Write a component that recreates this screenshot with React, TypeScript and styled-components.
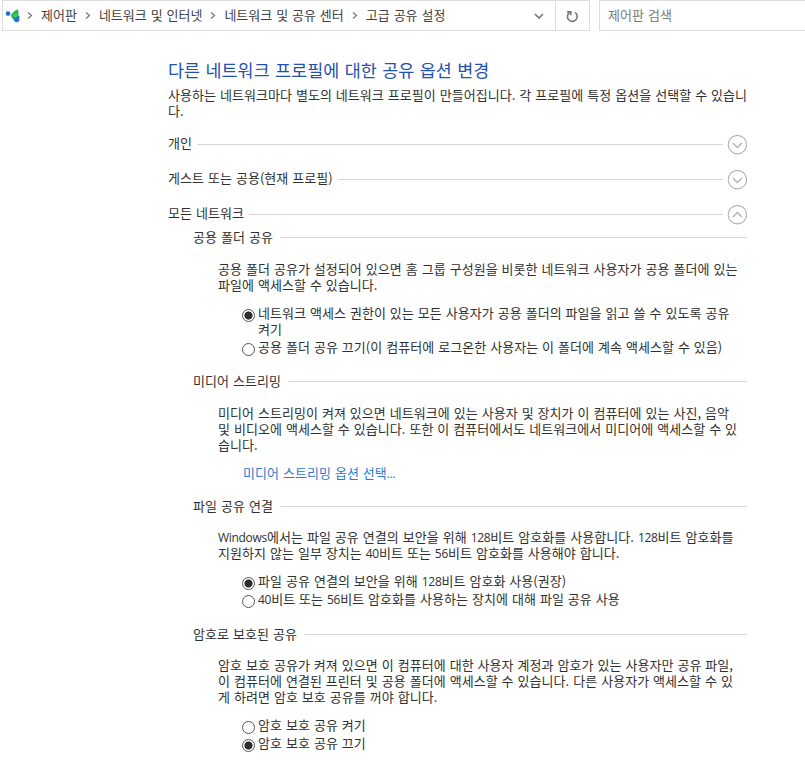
import React from 'react';
import styled, { createGlobalStyle } from 'styled-components';

const GlobalStyle = createGlobalStyle`
  * {
    box-sizing: border-box;
  }

  body {
    margin: 0;
    background: #fff;
    color: #303030;
    font-family: 'Noto Sans CJK KR', sans-serif;
    font-size: 13px;
    line-height: 16px;
    letter-spacing: 0.04px;
    word-spacing: 1px;
    overflow: hidden;
  }
`;

const Page = styled.div`
  width: 805px;
  height: 772px;
  overflow: hidden;
`;

const TopBar = styled.header`
  display: flex;
  height: 31px;
  padding-left: 2px;
  gap: 9px;
`;

const AddressBar = styled.div`
  display: flex;
  width: 588px;
  border: 1px solid #dedede;
`;

const Breadcrumbs = styled.nav`
  display: flex;
  align-items: center;
  flex: 1;
  padding-left: 2px;
  white-space: nowrap;
`;

const Crumb = styled.span`
  padding-bottom: 2px;
  color: #3f3f3f;
  letter-spacing: 0;
`;

const Separator = styled.svg<{ $first: boolean }>`
  width: 6px;
  height: 8px;
  margin: 0 8px 0 ${({ $first }) => ($first ? 6 : 8)}px;
  fill: none;
  stroke: #777;
  stroke-width: 1.2;
`;

const BarButton = styled.button<{ $divided?: boolean }>`
  display: flex;
  align-items: center;
  justify-content: center;
  width: 34px;
  padding: ${({ $divided }) => ($divided ? '1px 0 0' : '2px 0 0 2px')};
  border: 0;
  border-left: ${({ $divided }) => ($divided ? '1px solid #dedede' : '0')};
  background: none;
`;

const SearchBox = styled.div`
  display: flex;
  align-items: center;
  flex: 1;
  padding: 0 0 2px 8px;
  border: 1px solid #dedede;
  border-right: 0;
  color: #7b7b7b;
`;

const Content = styled.main`
  width: 579px;
  margin: 27px 0 0 168px;
`;

const Title = styled.h1`
  margin: 0;
  color: #2450b0;
  font-size: 17.4px;
  font-weight: 400;
  line-height: 24px;
  word-spacing: 1.5px;
  white-space: nowrap;
`;

const Lines = styled.div<{ $top?: number }>`
  margin-top: ${({ $top = 0 }) => $top}px;
`;

const Line = styled.div`
  height: 16px;
  white-space: pre;
`;

const Latin = styled.span`
  font-family: 'Open Sans', 'Noto Sans', sans-serif;
  font-size: 12px;
  line-height: 1;
  letter-spacing: -0.3px;
`;

const Profiles = styled.div`
  display: flex;
  flex-direction: column;
  gap: 15px;
  margin-top: 16px;
`;

const Profile = styled.div`
  display: flex;
  align-items: center;
  height: 20px;
`;

const ProfileLabel = styled.span`
  padding-bottom: 4px;
  white-space: nowrap;
`;

const Rule = styled.span<{ $margin: string }>`
  flex: 1;
  height: 1px;
  margin: ${({ $margin }) => $margin};
  background: #d5d5d5;
`;

const Section = styled.section<{ $top: number }>`
  margin: ${({ $top }) => $top}px 0 0 25px;
`;

const SectionHead = styled.h2`
  display: flex;
  align-items: center;
  height: 16px;
  margin: 0;
  font-size: 13px;
  font-weight: 400;
  white-space: nowrap;
`;

const SectionBody = styled.div`
  padding-left: 25px;
`;

const Options = styled.div`
  display: flex;
  flex-direction: column;
  gap: 2px;
  margin: 12px 0 0 24px;
`;

const Option = styled.label`
  display: flex;
  align-items: flex-start;
  gap: 3px;
`;

const Radio = styled.span<{ $checked: boolean }>`
  flex: none;
  width: 13px;
  height: 13px;
  margin: 4px 0 -1px;
  border: 1px solid #555;
  border-radius: 50%;
  background: ${({ $checked }) =>
    $checked ? 'radial-gradient(circle, #2e2e2e 3.7px, #fff 4.4px)' : '#fff'};
`;

const Link = styled.a`
  display: block;
  margin: 12px 0 0 25px;
  color: #2b7cd3;
`;

const NetworkIcon = () => (
  <svg width="16" height="16" viewBox="0 0 16 16">
    <path d="M3.5 6.5 9 7l3-4M9 8l4 5" fill="none" stroke="#9ccbe8" />
    <circle cx="3" cy="5.6" r="2.3" fill="#1973c8" />
    <path d="M6.2 7.5C7 4.5 9.5 2 13.4 1.4V9.5L10.5 12C8 11.3 6.2 10 6.2 7.5Z" fill="#25b34b" />
    <path d="M8.5 8.5 14.4 8v3.5c0 1.6-1 2.7-2.5 2.7-2.2 0-3-1.4-3.2-3Z" fill="#1d78c5" />
    <path d="M7.5 6.5 12 5v4l-2.2 1.2Z" fill="#37c657" />
  </svg>
);

const CrumbArrow = ({ first }: { first: boolean }) => (
  <Separator viewBox="0 0 6 8" $first={first}>
    <path d="m1 .5 3.5 3L1 6.5" />
  </Separator>
);

const Expander = ({ open }: { open: boolean }) => (
  <svg width="20" height="20" viewBox="0 0 20 20" fill="none" stroke="#b3b3b3">
    <circle cx="10.4" cy="9.7" r="9.2" strokeWidth="1.1" />
    <path d={open ? 'm5.9 12 4.5-4.5 4.5 4.5' : 'm5.9 8 4.5 4.5L14.9 8'} strokeWidth="1.4" />
  </svg>
);

// Latin words, digits and the ellipsis use a narrower face than the Hangul
const Mixed = ({ text }: { text: string }) => (
  <div>
    {text.split('\n').map((line) => (
      <Line key={line}>
        {line
          .split(/([A-Za-z0-9]+|\.{3})/)
          .map((part, i) => (i % 2 ? <Latin key={i}>{part}</Latin> : part))}
      </Line>
    ))}
  </div>
);

const crumbs = ['제어판', '네트워크 및 인터넷', '네트워크 및 공유 센터', '고급 공유 설정'];

const profiles = [
  { label: '개인', open: false },
  { label: '게스트 또는 공용(현재 프로필)', open: false },
  { label: '모든 네트워크', open: true },
];

interface SectionData {
  title: string;
  top: number;
  textTop: number;
  text: string;
  link?: string;
  options?: { label: string; checked: boolean }[];
}

const sections: SectionData[] = [
  {
    title: '공용 폴더 공유',
    top: 4,
    textTop: 16,
    text: '공용 폴더 공유가 설정되어 있으면 홈 그룹 구성원을 비롯한 네트워크 사용자가 공용 폴더에 있는\n파일에 액세스할 수 있습니다.',
    options: [
      {
        label: '네트워크 액세스 권한이 있는 모든 사용자가 공용 폴더의 파일을 읽고 쓸 수 있도록 공유\n켜기',
        checked: true,
      },
      { label: '공용 폴더 공유 끄기(이 컴퓨터에 로그온한 사용자는 이 폴더에 계속 액세스할 수 있음)', checked: false },
    ],
  },
  {
    title: '미디어 스트리밍',
    top: 18,
    textTop: 16,
    text: '미디어 스트리밍이 켜져 있으면 네트워크에 있는 사용자 및 장치가 이 컴퓨터에 있는 사진, 음악\n및 비디오에 액세스할 수 있습니다. 또한 이 컴퓨터에서도 네트워크에서 미디어에 액세스할 수 있\n습니다.',
    link: '미디어 스트리밍 옵션 선택...',
  },
  {
    title: '파일 공유 연결',
    top: 17,
    textTop: 15,
    text: 'Windows에서는 파일 공유 연결의 보안을 위해 128비트 암호화를 사용합니다. 128비트 암호화를\n지원하지 않는 일부 장치는 40비트 또는 56비트 암호화를 사용해야 합니다.',
    options: [
      { label: '파일 공유 연결의 보안을 위해 128비트 암호화 사용(권장)', checked: true },
      { label: '40비트 또는 56비트 암호화를 사용하는 장치에 대해 파일 공유 사용', checked: false },
    ],
  },
  {
    title: '암호로 보호된 공유',
    top: 19,
    textTop: 15,
    text: '암호 보호 공유가 켜져 있으면 이 컴퓨터에 대한 사용자 계정과 암호가 있는 사용자만 공유 파일,\n이 컴퓨터에 연결된 프린터 및 공용 폴더에 액세스할 수 있습니다. 다른 사용자가 액세스할 수 있\n게 하려면 암호 보호 공유를 꺼야 합니다.',
    options: [
      { label: '암호 보호 공유 켜기', checked: false },
      { label: '암호 보호 공유 끄기', checked: true },
    ],
  },
];

const App = () => {
  return (
    <Page>
      <GlobalStyle />
      <TopBar>
        <AddressBar>
          <Breadcrumbs>
            <NetworkIcon />
            {crumbs.map((crumb, i) => (
              <React.Fragment key={crumb}>
                <CrumbArrow first={i === 0} />
                <Crumb>{crumb}</Crumb>
              </React.Fragment>
            ))}
          </Breadcrumbs>
          <BarButton>
            <svg width="10" height="7" viewBox="0 0 10 7" fill="none" stroke="#777" strokeWidth="1.6">
              <path d="m1 1 4 4 4-4" />
            </svg>
          </BarButton>
          <BarButton $divided>
            <svg width="13" height="13" viewBox="0 0 13 13" fill="none" stroke="#777" strokeWidth="1.6">
              <path d="M9 2.4A4.9 4.9 0 1 1 4 2.2" />
              <path d="M1 1.7h3.8v3.6" />
            </svg>
          </BarButton>
        </AddressBar>
        <SearchBox>제어판 검색</SearchBox>
      </TopBar>
      <Content>
        <Title>다른 네트워크 프로필에 대한 공유 옵션 변경</Title>
        <Lines $top={5}>
          <Mixed
            text={
              '사용하는 네트워크마다 별도의 네트워크 프로필이 만들어집니다. 각 프로필에 특정 옵션을 선택할 수 있습니\n다.'
            }
          />
        </Lines>
        <Profiles>
          {profiles.map(({ label, open }) => (
            <Profile key={label}>
              <ProfileLabel>{label}</ProfileLabel>
              <Rule $margin="0 4px 1px 5px" />
              <Expander open={open} />
            </Profile>
          ))}
        </Profiles>
        {sections.map(({ title, top, textTop, text, link, options }) => (
          <Section key={title} $top={top}>
            <SectionHead>
              {title}
              <Rule $margin="1px 0 0 8px" />
            </SectionHead>
            <SectionBody>
              <Lines $top={textTop}>
                <Mixed text={text} />
              </Lines>
              {link && (
                <Link>
                  <Mixed text={link} />
                </Link>
              )}
              {options && (
                <Options>
                  {options.map(({ label, checked }) => (
                    <Option key={label}>
                      <Radio $checked={checked} />
                      <Mixed text={label} />
                    </Option>
                  ))}
                </Options>
              )}
            </SectionBody>
          </Section>
        ))}
      </Content>
    </Page>
  );
};

export default App;
